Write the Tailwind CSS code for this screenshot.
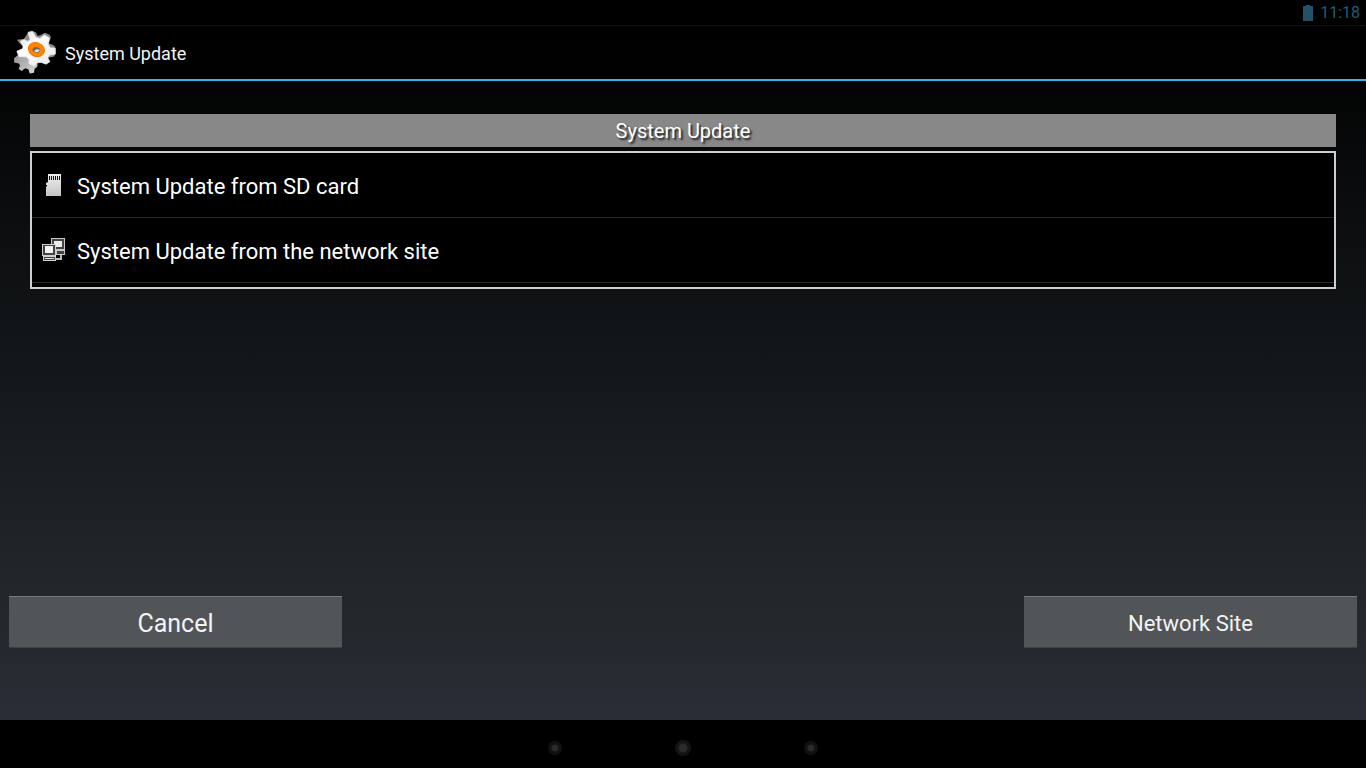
<!DOCTYPE html>
<html lang="en">
<head>
<meta charset="utf-8">
<meta name="viewport" content="width=device-width, initial-scale=1">
<title>System Update</title>
<script src="https://cdn.jsdelivr.net/npm/@tailwindcss/browser@4"></script>
</head>
<body class="flex min-h-screen flex-col bg-black font-[Roboto,sans-serif] text-[#f3f3f3]">
  <div class="flex h-[25px] items-center justify-end gap-[7px] bg-black pr-1.5 text-[#1f5d78]">
    <svg class="h-4 w-[10px]" viewBox="0 0 10 16" fill="#235267" role="img" aria-label="Battery"><path d="M3 0h4v1h3v15H0V1h3z"/></svg>
    <time class="text-base leading-6">11:18</time>
  </div>
  <div class="flex flex-1 flex-col bg-[linear-gradient(#000000,#111416_42%,#22272a_82%,#292d36)]">
    <header class="flex h-14 items-center gap-[5px] border-t border-b-2 border-t-[#111111] border-b-[#33b5e5] bg-black/50 pl-3">
      <svg class="size-12" viewBox="0 0 138 138">
        <defs>
          <linearGradient id="back" x1="0" y1="0" x2="1" y2="1"><stop offset="0" stop-color="#888"/><stop offset="1" stop-color="#ddd"/></linearGradient>
          <linearGradient id="front" x1="0" y1="0" x2="1" y2="1"><stop offset="0" stop-color="#ddd"/><stop offset=".4" stop-color="#fff"/><stop offset="1" stop-color="#e4e4e4"/></linearGradient>
        </defs>
        <path fill="url(#back)" d="M18 74L6 84v12l14 3 3 6-4 10 9 6 10-8 9 3 4 12 12-2 2-12 8-6V84L48 62z"/>
        <path fill="#8b8b8b" d="M48 8L56 4l13 6 5 10 12-4 8-5 13 5 5 8-7 17 15 6 6 8-4 24-20 4-60-20-20-22-8-10 20-2z"/>
        <path fill="url(#front)" stroke="#eee" stroke-linejoin="round" stroke-width="2" d="M46 10l14-2 8 15 12 4 13-10 15 9-4 18 6 10 14 1 1 17-17 3-5 8 6 11-11 7-14-5-11 1-9 9-15-6 0-12-8-8-21 0-6-16 17-8 1-8-8-13 11-5 11 6 6-6z"/>
        <ellipse cx="70" cy="59" rx="25" ry="21" fill="#ed7300" transform="rotate(20 70 59)"/>
        <ellipse cx="70" cy="58" rx="23" ry="19" fill="#ff8400" transform="rotate(20 70 58)"/>
        <ellipse cx="70" cy="60" rx="11" ry="8" fill="#666" transform="rotate(15 70 60)"/>
        <path d="M63 63c5-5 11-6 17-3-2 8-10 9-17 3z" fill="#ddd"/>
      </svg>
      <h1 class="pt-0.5 text-lg leading-6">System Update</h1>
    </header>
    <main class="flex flex-1 flex-col justify-between">
      <section class="px-[30px] pt-[33px]">
        <h2 class="h-[33px] bg-[#888888] text-center text-xl leading-[34px] text-white text-shadow-[2px_2px_2px_#222222]">System Update</h2>
        <ul class="mt-1 border-2 border-[#cfcfd1] bg-black pb-1 text-[22px] leading-8 text-white">
          <li class="border-b border-[#292929]">
            <a href="#sd" class="flex h-16 items-center gap-[11px] pl-[10px]">
              <svg class="size-6" viewBox="0 0 24 24">
                <defs><linearGradient id="card" x1="0" y1="0" x2="0" y2="1"><stop offset="0" stop-color="#eee"/><stop offset="1" stop-color="#c5c5c5"/></linearGradient></defs>
                <path fill="url(#card)" d="M6 1h13v22H4V14l1-1v-1H4v-2l2-1z"/>
                <path stroke="#111" d="M7.500 3v4M9.500 3v4M11.500 3v4M13.500 3v4M15.500 3v4M17.500 3v4"/>
              </svg>
              <span class="pt-1">System Update from SD card</span>
            </a>
          </li>
          <li class="border-b border-[#292929]">
            <a href="#network" class="flex h-16 items-center gap-[11px] pl-[10px]">
              <svg class="size-6" viewBox="0 0 24 24">
                <path fill="#c8c8c8" d="M9 0h14v12H9z"/>
                <path fill="#444" d="M10 1h12v10H10z"/>
                <path fill="#eee" d="M12 3h8v6h-8z"/>
                <path fill="#c8c8c8" d="M14 12h9v5h-9z"/>
                <path fill="#444" d="M15 13h7v3h-7z"/>
                <path fill="none" stroke="#bbb" stroke-width="2" d="M14 21h5v-4"/>
                <path fill="#d0d0d0" d="M0 6h14v12H0z"/>
                <path fill="#444" d="M1 7h12v10H1z"/>
                <path fill="#f4f4f4" d="M3 8h8v7H3z"/>
                <path fill="#d0d0d0" d="M1 18h13v5H1z"/>
                <path fill="#444" d="M2 19h11v3H2z"/>
                <path fill="#ddd" d="M3 20h9v1H3z"/>
              </svg>
              <span class="pt-1">System Update from the network site</span>
            </a>
          </li>
        </ul>
      </section>
      <div class="grid grid-cols-[1fr_2fr_1fr] gap-2 px-[9px] pb-[72px]">
        <button type="button" class="h-13 border-t border-b border-t-[#777b7c] border-b-[#3c4043] bg-[#515557] pt-1 text-[25px] leading-8">Cancel</button>
        <button type="button" class="col-start-3 h-13 border-t border-b border-t-[#777b7c] border-b-[#3c4043] bg-[#515557] pt-1 text-[22px] leading-8">Network Site</button>
      </div>
    </main>
  </div>
  <nav class="flex h-12 items-center justify-center gap-[113px] bg-black pt-[7px]" aria-label="System navigation">
    <button type="button" aria-label="Back" class="grid size-[14px] place-items-center rounded-full bg-[#111111]"><span class="size-1.5 rounded-full bg-[#2b2b2b] ring-1 ring-[#1c1c1c]"></span></button>
    <button type="button" aria-label="Home" class="grid size-4 place-items-center rounded-full bg-[#141414]"><span class="size-2 rounded-full bg-[#2b2b2b] ring-1 ring-[#1f1f1f]"></span></button>
    <button type="button" aria-label="Recent apps" class="grid size-[14px] place-items-center rounded-full bg-[#111111]"><span class="size-1.5 rounded-full bg-[#2b2b2b] ring-1 ring-[#1c1c1c]"></span></button>
  </nav>
</body>
</html>
